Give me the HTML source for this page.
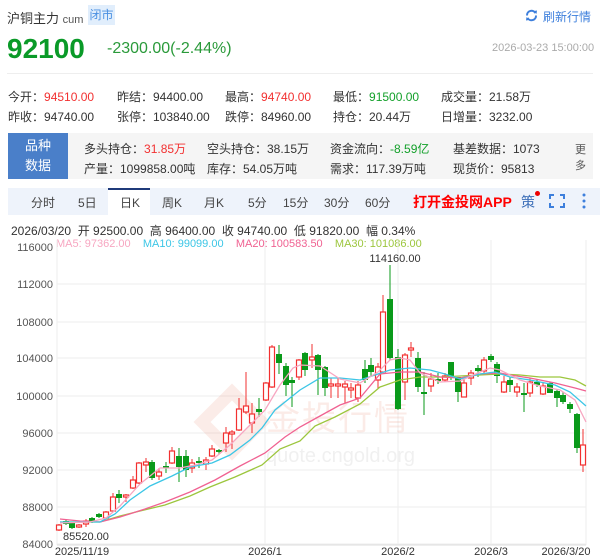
<!DOCTYPE html>
<html><head><meta charset="utf-8">
<style>
*{margin:0;padding:0;box-sizing:border-box}
body{width:600px;height:556px;background:#fff;font-family:"Liberation Sans","Noto Sans CJK SC",sans-serif;color:#333;position:relative;overflow:hidden}
.a{position:absolute;white-space:nowrap}
.r{color:#f23030}.g{color:#13a02a}
.s{font-size:12px;color:#333}
</style></head><body>
<div class="a" style="left:7px;top:8px;font-size:13px;color:#333">沪铜主力 <span style="font-size:11px;color:#555">cum</span></div>
<div class="a" style="left:88px;top:5px;width:27px;height:20px;background:#e1eefc;color:#4a90e2;font-size:12px;line-height:20px;text-align:center">闭市</div>
<svg class="a" style="left:525px;top:9px" width="13" height="13" viewBox="0 0 13 13"><path d="M2 6.5 A4.5 4.5 0 0 1 10.5 4.2" fill="none" stroke="#3d7fdc" stroke-width="2"/><path d="M11 6.5 A4.5 4.5 0 0 1 2.5 8.8" fill="none" stroke="#3d7fdc" stroke-width="2"/><path d="M9 2 L12 1.5 L11.5 5 Z" fill="#3d7fdc"/><path d="M4 11 L1 11.5 L1.5 8 Z" fill="#3d7fdc"/></svg>
<div class="a" style="left:543px;top:8px;font-size:12px;color:#3d7fdc">刷新行情</div>
<div class="a g" style="left:7px;top:33px;font-size:28px;font-weight:bold;color:#0a9a28">92100</div>
<div class="a g" style="left:107px;top:40px;font-size:16px;color:#2a9a3a">-2300.00(-2.44%)</div>
<div class="a" style="left:492px;top:42px;font-size:11px;color:#aaa">2026-03-23 15:00:00</div>
<div class="a" style="left:7px;top:73px;width:586px;height:1px;background:#eee"></div>
<div class="a s" style="left:8px;top:88px">今开：<span class="r">94510.00</span></div>
<div class="a s" style="left:117px;top:88px">昨结：94400.00</div>
<div class="a s" style="left:225px;top:88px">最高：<span class="r">94740.00</span></div>
<div class="a s" style="left:333px;top:88px">最低：<span class="g">91500.00</span></div>
<div class="a s" style="left:441px;top:88px">成交量：21.58万</div>
<div class="a s" style="left:8px;top:108px">昨收：94740.00</div>
<div class="a s" style="left:117px;top:108px">张停：103840.00</div>
<div class="a s" style="left:225px;top:108px">跌停：84960.00</div>
<div class="a s" style="left:333px;top:108px">持仓：20.44万</div>
<div class="a s" style="left:441px;top:108px">日增量：3232.00</div>
<div class="a" style="left:8px;top:133px;width:585px;height:46px;background:#f5f5f5"></div>
<div class="a" style="left:8px;top:133px;width:60px;height:46px;background:#4a7fc9;color:#fff;font-size:13px;line-height:20px;text-align:center;padding-top:3px">品种<br>数据</div>
<div class="a s" style="left:84px;top:140px">多头持仓：<span class="r">31.85万</span></div>
<div class="a s" style="left:207px;top:140px">空头持仓：38.15万</div>
<div class="a s" style="left:330px;top:140px">资金流向：<span class="g">-8.59亿</span></div>
<div class="a s" style="left:453px;top:140px">基差数据：1073</div>
<div class="a s" style="left:84px;top:160px">产量：1099858.00吨</div>
<div class="a s" style="left:207px;top:160px">库存：54.05万吨</div>
<div class="a s" style="left:330px;top:160px">需求：117.39万吨</div>
<div class="a s" style="left:453px;top:160px">现货价：95813</div>
<div class="a" style="left:575px;top:142px;font-size:11px;line-height:16px;color:#555">更<br>多</div>
<div class="a" style="left:8px;top:188px;width:592px;height:27px;background:#eef3fb"></div>
<div class="a" style="left:108px;top:188px;width:42px;height:27px;background:#fff;border-top:2px solid #1f3a7a"></div>
<div class="a" style="left:0;top:194px;font-size:12px;color:#444">
<span class="a" style="left:31px">分时</span><span class="a" style="left:78px">5日</span><span class="a" style="left:120px">日K</span><span class="a" style="left:162px">周K</span><span class="a" style="left:204px">月K</span><span class="a" style="left:248px">5分</span><span class="a" style="left:283px">15分</span><span class="a" style="left:324px">30分</span><span class="a" style="left:365px">60分</span></div>
<div class="a" style="left:413px;top:192px;font-size:14px;font-weight:bold;color:#f00">打开金投网APP</div>
<div class="a" style="left:521px;top:192px;font-size:14px;color:#3d6fb8">策</div>
<div class="a" style="left:535px;top:191px;width:5px;height:5px;border-radius:3px;background:#e00"></div>
<svg class="a" style="left:549px;top:194px" width="16" height="14"><path d="M1 5V1H5M11 1H15V5M15 9V13H11M5 13H1V9" fill="none" stroke="#3d7fdc" stroke-width="2"/></svg>
<svg class="a" style="left:582px;top:193px" width="4" height="16"><circle cx="2" cy="2" r="1.5" fill="#3d7fdc"/><circle cx="2" cy="8" r="1.5" fill="#3d7fdc"/><circle cx="2" cy="14" r="1.5" fill="#3d7fdc"/></svg>
<div class="a" style="left:11px;top:222px;font-size:12px;color:#333">2026/03/20 &nbsp;开 92500.00 &nbsp;高 96400.00 &nbsp;收 94740.00 &nbsp;低 91820.00 &nbsp;幅 0.34%</div>
<div class="a" style="left:56px;top:238px;font-size:11px"><span style="color:#f7a6c1">MA5: 97362.00</span>&nbsp;&nbsp;&nbsp; <span style="color:#3cc6e6">MA10: 99099.00</span>&nbsp;&nbsp;&nbsp; <span style="color:#f06292">MA20: 100583.50</span>&nbsp;&nbsp;&nbsp; <span style="color:#9cc63d">MA30: 101086.00</span></div>
<svg id="c" class="a" style="left:0;top:0" width="600" height="556"></svg>
<script>
var s='';
var ys=[[116000,247],[112000,284],[108000,322],[104000,358],[100000,396],[96000,433],[92000,470],[88000,507],[84000,544]];
ys.forEach(function(v){ if(v[0]!=116000) s+='<line x1="57" x2="586" y1="'+v[1]+'" y2="'+v[1]+'" stroke="#eee"/>';
 s+='<text x="53" y="'+(v[1]+4)+'" text-anchor="end" font-size="11" fill="#555" font-family="Liberation Sans">'+v[0]+'</text>';});
[57,265,398,491,586].forEach(function(x){s+='<line x1="'+x+'" x2="'+x+'" y1="240" y2="545" stroke="#eee"/>';});
s+='<line x1="57" x2="586" y1="545" y2="545" stroke="#ddd"/>';
[["2025/11/19",82],["2026/1",265],["2026/2",398],["2026/3",491],["2026/3/20",566]].forEach(function(l){s+='<text x="'+l[1]+'" y="555" text-anchor="middle" font-size="11" fill="#333" font-family="Liberation Sans">'+l[0]+'</text>';});
s+='<g opacity="0.12"><path d="M232 392 L262 422 L232 452 L202 422 Z" fill="none" stroke="#e06040" stroke-width="12"/><text x="266" y="430" font-size="34" fill="#e06040" font-family="Noto Sans CJK SC" letter-spacing="2">金投行情</text><text x="266" y="462" font-size="20" fill="#888" font-family="Liberation Sans">quote.cngold.org</text></g>';
var C=[[59,525,530,524,531,1],[66,521,524,520,525,0],[72,523,528,522,529,0],[79,525,527,524,528,1],[86,521,524,519,527,1],[92,518,522,517,523,0],[99,514,517,513,518,0],[106,512,518,511,519,1],[113,497,511,493,512,1],[119,494,498,490,503,0],[126,495,497,494,502,1],[133,480,488,476,489,1],[139,463,483,462,484,1],[146,462,465,458,472,1],[152,462,478,460,480,0],[159,472,476,468,480,1],[166,466,468,462,473,0],[172,451,463,447,464,1],[179,456,467,448,482,0],[186,456,470,450,477,0],[192,463,468,459,473,1],[199,461,463,457,468,0],[206,460,464,457,470,1],[212,449,456,445,457,1],[219,450,452,449,454,0],[226,433,443,427,452,1],[232,432,434,430,449,1],[239,409,430,398,431,1],[246,406,412,372,414,1],[252,414,423,403,433,1],[259,409,412,398,417,0],[266,383,400,382,401,1],[272,347,387,345,388,1],[279,354,363,345,374,0],[286,366,385,363,396,0],[292,380,383,377,407,0],[299,360,377,359,380,1],[305,353,370,352,376,0],[312,357,360,344,368,1],[318,355,370,354,395,0],[325,367,388,366,396,0],[331,384,386,378,398,1],[338,384,386,378,398,1],[345,384,387,381,403,1],[351,388,390,383,398,1],[358,385,398,381,402,1],[365,369,380,360,383,0],[371,365,372,358,377,0],[378,367,380,363,389,1],[383,312,372,295,373,1],[390,299,358,265,360,0],[398,357,409,349,410,0],[405,355,382,353,400,1],[411,348,350,342,357,1],[418,358,387,352,392,0],[424,392,394,372,415,0],[431,379,386,373,392,1],[438,379,381,373,384,0],[445,376,380,373,382,1],[451,362,377,362,380,0],[458,377,392,377,402,0],[464,383,397,377,397,1],[471,373,378,370,385,1],[478,368,371,365,377,0],[484,360,371,357,375,1],[491,356,360,354,362,0],[497,364,376,362,383,0],[504,382,392,376,393,1],[510,380,385,377,392,0],[517,387,392,383,397,1],[524,393,395,383,412,0],[530,382,393,378,397,1],[537,382,385,380,387,0],[543,386,394,383,395,1],[550,383,393,382,393,0],[557,391,398,390,407,0],[563,395,402,392,404,0],[570,404,409,402,413,0],[577,414,448,413,453,0],[583,445,465,429,472,1]];
C.forEach(function(c){var col=c[5]?'#f23030':'#0a9a1a';
 s+='<line x1="'+c[0]+'" x2="'+c[0]+'" y1="'+c[3]+'" y2="'+c[4]+'" stroke="'+col+'"/>';
 var h=Math.max(c[2]-c[1],1.5);
 if(c[5]) s+='<rect x="'+(c[0]-2.5)+'" y="'+c[1]+'" width="5" height="'+h+'" fill="#fff" stroke="'+col+'" stroke-width="1.2"/>';
 else s+='<rect x="'+(c[0]-3)+'" y="'+c[1]+'" width="6" height="'+h+'" fill="'+col+'"/>';});
function pl(p,col){s+='<polyline points="'+p+'" fill="none" stroke="'+col+'" stroke-width="1.3"/>';}
pl("60,522 100,522 120,516 140,511 165,505 190,496 210,487 235,477 262,465 280,449 300,441 315,426 335,417 360,404 380,387 400,380 420,377 440,377 460,376 480,375 500,374 520,375 540,377 560,377 575,380 586,386","#9cc63d");
pl("60,519 80,521 100,522 120,517 145,509 165,502 190,492 215,480 240,466 265,453 285,437 300,427 320,416 340,405 360,398 380,374 400,372 420,372 440,377 460,378 480,374 500,373 510,375 530,378 555,383 575,388 586,391","#f06292");
pl("60,522 100,522 115,514 130,500 150,486 172,476 190,467 212,463 230,455 250,440 262,428 275,410 290,398 300,390 320,378 340,378 360,380 378,374 390,370 410,368 430,370 445,374 460,379 480,374 495,372 510,377 530,380 555,385 570,392 586,406","#3cc6e6");
pl("60,523 90,522 106,518 120,506 140,484 160,468 180,468 195,465 212,460 230,445 250,425 265,410 280,385 293,368 300,365 320,366 340,379 360,383 378,372 390,360 400,358 410,360 420,373 440,382 460,381 480,372 490,368 500,370 520,380 540,386 560,390 575,400 586,422","#f7a6c1");
s+='<text x="395" y="262" text-anchor="middle" font-size="11" fill="#333" font-family="Liberation Sans">114160.00</text>';
s+='<text x="63" y="540" font-size="11" fill="#333" font-family="Liberation Sans">85520.00</text>';
document.getElementById('c').innerHTML=s;
</script>
</body></html>
